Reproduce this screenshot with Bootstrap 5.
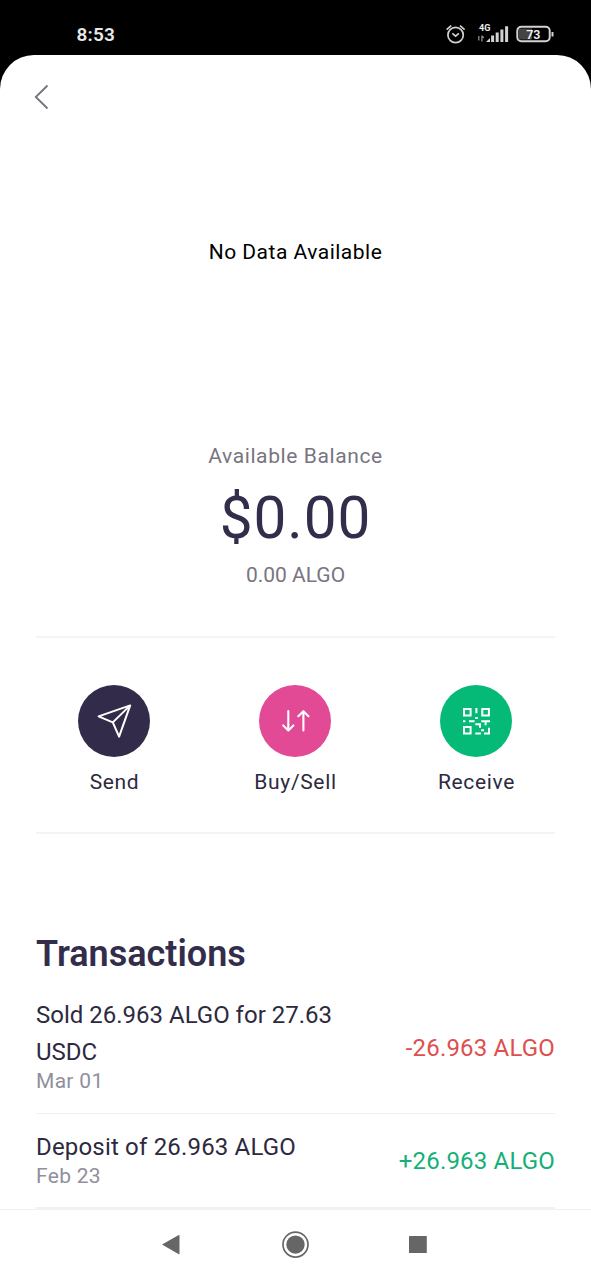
<!DOCTYPE html>
<html lang="en">
<head>
<meta charset="utf-8">
<meta name="viewport" content="width=device-width, initial-scale=1">
<title>Algorand wallet</title>
<link href="https://cdn.jsdelivr.net/npm/bootstrap@5.3.0/dist/css/bootstrap.min.css" rel="stylesheet">
<style>
  body { font-family: Roboto, "Liberation Sans", sans-serif; color: #2d2a40; background: #000; }
  .screen { width: 591px; height: 1280px; }
  .status { height: 55px; padding: 15px 37px 0 76.5px; color: #e8e8e8; }
  .status svg { margin-top: -1px; }
  .clock { font-size: 19px; line-height: 40px; font-weight: 600; letter-spacing: .2px; }
  .sheet { border-radius: 34px 34px 0 0; }
  .topbar { height: 84px; padding: 29px 0 0 34px; }
  .chart { height: 303px; padding-top: 99px; color: #000; }
  .t21 { font-size: 21px; line-height: 28px; letter-spacing: .65px; }
  .chart.t21 { letter-spacing: .5px; }
  .t21.avail { letter-spacing: .6px; }
  .t21.coins { letter-spacing: 0; }
  .muted { color: #78757f; }
  .amount { font-size: 58.5px; line-height: 70px; margin-top: 13px; margin-bottom: 8px; letter-spacing: .9px; color: #322d4b; }
  .rule { height: 2px; background: #f4f4f5; margin: 0 36px; }
  .balance { padding-bottom: 47px; }
  .actions { height: 194px; padding: 47px 24px 0; }
  .disc { width: 72px; height: 72px; margin: 0 1px 11px 0; }
  .send { background: #322c4a; } .trade { background: #e24a96; } .receive { background: #05b977; }
  .history { padding: 98px 36px 0; }
  .history h2 { font-size: 36px; line-height: 44px; font-weight: 600; margin-bottom: 6px; color: #322d4b; }
  .entry { border-bottom: 1px solid #f1f1f3; }
  .entry .info { padding: 15px 0 22px; width: 320px; }
  .entry + .entry .info { padding-bottom: 21px; }
  .entry + .entry { border-bottom-width: 2px; }
  .what, .sum { font-size: 24px; line-height: 37px; letter-spacing: .18px; }
  .what.long { letter-spacing: 0; }
  .sum { padding-top: 2px; }
  .when { font-size: 21px; line-height: 20px; color: #918f9b; letter-spacing: .3px; }
  .loss { color: #dd504e; } .gain { color: #14b077; }
  .keys { height: 71px; border-top: 1px solid #f1f1f1; }
</style>
</head>
<body>
<div class="screen d-flex flex-column overflow-hidden">
  <header class="status d-flex justify-content-between flex-shrink-0">
    <span class="clock">8:53</span>
    <svg width="109" height="40" viewBox="445 14 109 40" fill="none" stroke="#d2d2d2">
      <circle cx="455.6" cy="35" r="7.7" stroke-width="1.7"/>
      <path d="M446.6 29.7l4.6-4M464.6 29.7l-4.6-4M452.3 33.4l3.3 2.8 3.3-2.8" stroke-width="1.7"/>
      <path d="M478.8 36v4.5M481.9 41.5v-6M482 36l1.8 1.8" stroke-width="1.2" stroke="#999"/>
      <path d="M486 41.9l4-4v4z" fill="#d2d2d2" stroke="none"/>
      <path d="M492.6 35.6v6.3M497.2 32.4v9.5M501.9 29.5v12.4M506.6 26.3v15.6" stroke-width="3"/>
      <text x="479" y="31.3" font-size="9" font-weight="700" textLength="11.4" lengthAdjust="spacingAndGlyphs" fill="#eee" stroke="none">4G</text>
      <rect x="519" y="28.5" width="13" height="11" fill="#444" stroke="none"/>
      <rect x="517.3" y="26.7" width="32.4" height="14.6" rx="4" stroke-width="2"/>
      <path d="M552.5 32v4.5" stroke-width="2"/>
      <text x="526.2" y="38.5" font-size="12.5" font-weight="600" fill="#eee" stroke="none">73</text>
    </svg>
  </header>
  <main class="sheet bg-white flex-grow-1 overflow-hidden">
    <div class="topbar">
      <svg class="d-block" width="16" height="26" viewBox="0 0 16 26" fill="none" stroke="#77757f" stroke-width="1.9"><path d="M13.5 1.5L1.8 13l11.7 11.5"/></svg>
    </div>
    <div class="chart t21 text-center">No Data Available</div>
    <section class="balance text-center">
      <div class="t21 muted avail">Available Balance</div>
      <div class="amount">$0.00</div>
      <div class="t21 muted coins">0.00 ALGO</div>
    </section>
    <div class="rule"></div>
    <nav class="actions row g-0 text-center">
      <div class="col d-flex flex-column align-items-center">
        <div class="disc send rounded-circle">
          <svg class="d-block" width="72" height="72" viewBox="78 685 72 72" fill="none" stroke="#fff" stroke-width="2" stroke-linejoin="round"><path d="M130.2 705.4L98.6 716.4l14.2 6 6.3 14.2zM130.2 705.4l-17.4 17"/></svg>
        </div>
        <div class="t21">Send</div>
      </div>
      <div class="col d-flex flex-column align-items-center">
        <div class="disc trade rounded-circle">
          <svg class="d-block" width="72" height="72" viewBox="259 685 72 72" fill="none" stroke="#fff" stroke-width="2.1" stroke-linecap="round" stroke-linejoin="round"><path d="M288.3 711v19.3M283.2 725.4l5.1 5 5.1-5M303.4 730.5v-19.3M298.3 716.2l5.1-5 5.1 5"/></svg>
        </div>
        <div class="t21">Buy/Sell</div>
      </div>
      <div class="col d-flex flex-column align-items-center">
        <div class="disc receive rounded-circle">
          <svg class="d-block" width="72" height="72" viewBox="440 685 72 72" fill="none" stroke="#fff" stroke-width="2"><path d="M464 709h6.6v6.4H464zM482.3 709h6.6v6.4h-6.6zM464 727.1h6.6v6.4H464zM476.4 708v5.2M475.2 717.9h2.6M463 721.2h2.4M469 721.2h5.6M481.3 721.2h8.7M485.6 721v4.2M475.3 724.2h4.7v3.6M481.2 730.2h2.8M475.3 733.4h5.6M484 733.4h5v-5.6"/></svg>
        </div>
        <div class="t21">Receive</div>
      </div>
    </nav>
    <div class="rule"></div>
    <section class="history">
      <h2>Transactions</h2>
      <div class="entries">
        <div class="entry d-flex justify-content-between align-items-center">
          <div class="info"><div class="what long">Sold 26.963 ALGO for 27.63 USDC</div><div class="when">Mar 01</div></div>
          <div class="sum loss">-26.963 ALGO</div>
        </div>
        <div class="entry d-flex justify-content-between align-items-center">
          <div class="info"><div class="what">Deposit of 26.963 ALGO</div><div class="when">Feb 23</div></div>
          <div class="sum gain">+26.963 ALGO</div>
        </div>
      </div>
    </section>
  </main>
  <footer class="keys bg-white flex-shrink-0">
    <svg class="d-block" width="591" height="70" viewBox="0 1210 591 70" fill="#666">
      <path d="M162 1244.6l16.8-9.6q.7-.3.7.5v18.2q0 .8-.7.5z"/>
      <circle cx="295.5" cy="1244.6" r="12.5" fill="none" stroke="#666" stroke-width="1.7"/>
      <circle cx="295.5" cy="1244.6" r="9.2"/>
      <rect x="409" y="1236" width="17.8" height="17" rx=".6"/>
    </svg>
  </footer>
</div>
<script src="https://cdn.jsdelivr.net/npm/bootstrap@5.3.0/dist/js/bootstrap.bundle.min.js"></script>
</body>
</html>
